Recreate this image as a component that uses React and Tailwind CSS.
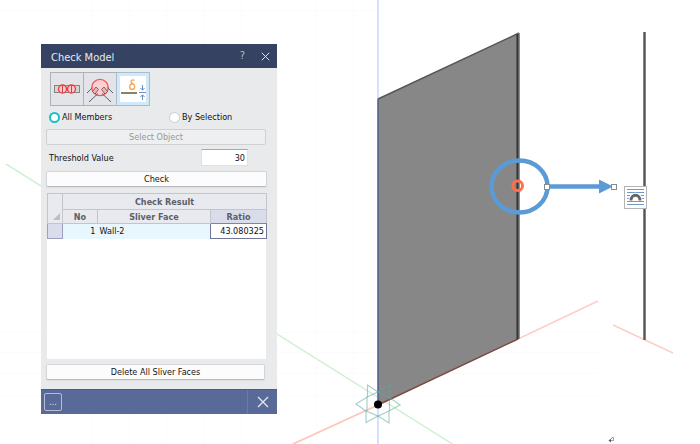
import React, { useState } from "react";

const buttonClass =
  "block h-4 rounded-xs border border-[#d4d5d8] border-b-[#b9babd] bg-[#fcfcfc] text-center leading-3 text-[#111] shadow-xs";

// 3D scene: axes, wall and the callout that points at the sliver face
function ModelView() {
  return (
    <svg
      className="absolute top-0 left-0"
      width="700"
      height="444"
      viewBox="0 0 700 444"
      fill="none"
    >
      {/* Grid */}
      <g stroke="#fbfbfb">
        <path d="M91.500 0V444M129.500 0V444M166.500 0V444M203.500 0V444M241.500 0V444M316.500 0V444M353.500 0V444" />
        <path d="M0 10.500H378M0 332.500H598M0 352.500H598M0 373.500H598M0 395.500H598" />
      </g>

      {/* Axes */}
      <path d="M6 164L454 445" stroke="#d3f0d5" strokeWidth="1.500" />
      <path d="M293 444L378 405" stroke="#ffc5ba" strokeWidth="1.800" />
      <path d="M518 339L598 301" stroke="#fdcfc6" strokeWidth="1.500" />
      <path d="M613 325L673 353" stroke="#fdcfc6" strokeWidth="1.500" />
      <path d="M378 0V444" stroke="#cbd9fa" strokeWidth="1.600" />

      {/* Wall */}
      <path d="M378 99L519 33V339L378 405Z" fill="#878787" />
      <path d="M378 99L519 33" stroke="#555" strokeWidth="1.400" />
      <path d="M378 405L518 339" stroke="#804a43" strokeWidth="1.500" />
      <path d="M378 99V405" stroke="#4a5c8c" strokeWidth="1.400" />
      <path d="M519 33V339" stroke="#909090" strokeWidth="2" />
      <path d="M517.500 34V339" stroke="#333" strokeWidth="2" />

      {/* Side view of the wall */}
      <path d="M644.500 32V340" stroke="#9a9a9a" strokeWidth="3" />
      <path d="M644.500 32V340" stroke="#555" strokeWidth="1.600" />

      {/* Origin */}
      <g stroke="#5fa9a3" strokeOpacity="0.550" strokeWidth="1.200">
        <path d="M367.500 385L378 392L390 385V398L400 405L389 411V423L378 416L366 422.500V411L356 404L367.500 397Z" />
        <path d="M367 397V411M389.500 398V411M367 397L378 392L389.500 398M366 411L378 416L389 411" />
      </g>
      <circle cx="378" cy="404.500" r="4" fill="#000" />

      {/* Callout */}
      <ellipse cx="519.500" cy="186.500" rx="28" ry="26" stroke="#5b9bd5" strokeWidth="4.500" />
      <circle cx="517.700" cy="185.700" r="4.800" stroke="#ff6f4b" strokeWidth="3" />
      <path d="M549 186.500H601" stroke="#5b9bd5" strokeWidth="4.500" />
      <path d="M599 179.500L613 186.500L599 193.500Z" fill="#5b9bd5" />
      <g fill="#fff" stroke="#8a8a8a">
        <rect x="544.500" y="184.500" width="5" height="5" />
        <rect x="611.500" y="184.500" width="5" height="5" />
      </g>

      {/* Paragraph mark */}
      <path d="M611 438.500H612V437.500H613.500V440.500H610" stroke="#888" strokeWidth="0.800" />
      <path d="M608.500 440.500L611 438.700V442.500Z" fill="#555" />
    </svg>
  );
}

function OverlapIcon() {
  return (
    <svg width="26" height="26" viewBox="0 0 26 26" fill="none">
      <rect x="0.500" y="9.500" width="25" height="7" fill="#d2d4d6" stroke="#80858a" />
      <g fill="#fbc9cb" stroke="#f0383f" strokeWidth="1.300">
        <circle cx="8.500" cy="13" r="4" />
        <circle cx="17.500" cy="13" r="4" />
      </g>
      <path d="M8.500 9.500V16.500M17.500 9.500V16.500" stroke="#c0484f" />
    </svg>
  );
}

function JointIcon() {
  return (
    <svg width="26" height="26" viewBox="0 0 26 26" fill="none">
      <path d="M0 17L6 11L11 17L2 26ZM26 17L20 11L15 17L24 26Z" fill="#dfe2e6" />
      <circle cx="13" cy="11.500" r="8.200" fill="#fccfd1" stroke="#f4545a" strokeWidth="1.300" />
      <path d="M0 17L5.500 11.500M2 26L11 17.500M26 17L20.500 11.500M24 26L15 17.500" stroke="#5b5f66" />
      <path
        d="M5.500 15.500L9 11L11.500 13.500L8 18ZM20.500 15.500L17 11L14.500 13.500L18 18Z"
        fill="#dcb9bd"
        stroke="#8d4d54"
        strokeWidth="0.900"
      />
    </svg>
  );
}

function SliverIcon() {
  return (
    <svg width="26" height="26" viewBox="0 0 26 26" fill="none">
      <rect width="26" height="26" fill="#fff" />
      <path
        d="M14.500 4.500C13 3.500 10.500 4 11 5.800C11.500 7.300 14.700 8 14.700 10.500C14.700 12.500 13.700 13.500 12.200 13.500C10.500 13.500 9.700 12.300 9.700 10.700C9.700 9 10.800 8 12.500 7.800"
        stroke="#f7a258"
        strokeWidth="1.300"
      />
      <path d="M1 17H17" stroke="#8a8264" strokeWidth="2" />
      <path d="M19 16.500H26M22.500 9V14M20.500 12L22.500 14.200L24.500 12M22.500 24V19M20.500 21L22.500 18.800L24.500 21" stroke="#6f8cc0" />
    </svg>
  );
}

function CloseIcon({ size }) {
  return (
    <svg width={size} height={size} viewBox="0 0 12 12" stroke="#e4e8f2" strokeWidth="1.300">
      <path d="M1 1L11 11M11 1L1 11" />
    </svg>
  );
}

const tools = [
  { id: "overlap", label: "Overlapping members", Icon: OverlapIcon },
  { id: "joint", label: "Joints", Icon: JointIcon },
  { id: "sliver", label: "Sliver faces", Icon: SliverIcon },
];

const results = [{ no: 1, name: "Wall-2", ratio: "43.080325" }];

function CheckModelDialog() {
  const [tool, setTool] = useState("sliver");
  const [scope, setScope] = useState("all");
  const [threshold, setThreshold] = useState("30");

  return (
    <section className="relative w-[236px] bg-[#e8eaec]">
      {/* Title bar */}
      <header className="flex h-6 items-center bg-[#354262] pr-[7px] pl-[10px] text-[#e6eaf3]">
        <h1 className="flex-1 pt-1 text-[11px] leading-4 font-medium">Check Model</h1>
        <button aria-label="Help" className="mr-4 text-[11px] text-[#b4bccf]">
          ?
        </button>
        <button aria-label="Close">
          <CloseIcon size={9} />
        </button>
      </header>

      <div className="px-[5px] pt-1 pb-[9px]">
        {/* Check type */}
        <div className="ml-1 flex">
          {tools.map(({ id, label, Icon }) => (
            <button
              key={id}
              aria-label={label}
              onClick={() => setTool(id)}
              className={`flex h-[34px] w-[34px] -mr-px items-center justify-center border ${
                tool === id
                  ? "border-[#a9bccb] bg-[#cfe9fb]"
                  : "border-[#aeb1b6] bg-[#e3e4e7]"
              }`}
            >
              <Icon />
            </button>
          ))}
        </div>

        {/* Scope */}
        <div className="mt-[3px] flex pl-[3px]">
          {[
            ["all", "All Members"],
            ["selection", "By Selection"],
          ].map(([value, label]) => (
            <label key={value} className="flex h-4 w-[120px] shrink-0 items-center gap-[2px]">
              <input
                type="radio"
                name="scope"
                checked={scope === value}
                onChange={() => setScope(value)}
                className="h-[11px] w-[11px] appearance-none rounded-full border border-[#c9cbce] bg-white checked:border-2 checked:border-[#19bfc6]"
              />
              {label}
            </label>
          ))}
        </div>

        <button
          disabled
          className="mt-1 block h-4 w-[220px] rounded-xs border border-[#cfd0d2] bg-[#eeeff0] leading-3 text-[#96989b]"
        >
          Select Object
        </button>

        <div className="mt-1 flex h-[17px] items-center pl-[3px]">
          <label htmlFor="threshold" className="w-[152px]">
            Threshold Value
          </label>
          <input
            id="threshold"
            value={threshold}
            onChange={(e) => setThreshold(e.target.value)}
            className="h-[17px] w-[47px] border border-[#e0e1e3] border-t-[#a5a7ab] bg-white pr-[2px] text-right outline-none"
          />
        </div>

        <button className={`${buttonClass} mt-[5px] w-[221px]`}>Check</button>

        {/* Results */}
        <div className="mt-[6px] ml-px h-[166px] w-[219px] bg-white">
          <table className="w-full table-fixed border-collapse">
            <colgroup>
              <col className="w-[15px]" />
              <col className="w-[35px]" />
              <col className="w-[113px]" />
              <col className="w-[56px]" />
            </colgroup>
            <thead className="bg-[#e9eaef] text-[#5d6068]">
              <tr className="h-4">
                <th rowSpan={2} className="border border-[#c3c5cc] p-0 align-bottom">
                  <svg className="mb-[3px] ml-[5px]" width="7" height="7" viewBox="0 0 7 7">
                    <path d="M7 0V7H0Z" fill="#bcbec4" />
                  </svg>
                </th>
                <th colSpan={3} className="border border-[#c3c5cc] p-0">
                  Check Result
                </th>
              </tr>
              <tr className="h-[14px]">
                <th className="border border-[#c3c5cc] p-0">No</th>
                <th className="border border-[#c3c5cc] p-0">Sliver Face</th>
                <th className="border border-[#c3c5cc] border-b-[#8084a0] bg-[#d9dcea] p-0">Ratio</th>
              </tr>
            </thead>
            <tbody>
              {results.map((row) => (
                <tr key={row.no} className="h-[15px] bg-[#e8f6fe]">
                  <td className="border border-[#9da1bd] bg-[#d9dcea] p-0" />
                  <td className="p-0 pr-[2px] text-right">{row.no}</td>
                  <td className="p-0 pl-[2px]">{row.name}</td>
                  <td className="border border-[#70769a] bg-white p-0 pr-[2px] text-right">{row.ratio}</td>
                </tr>
              ))}
            </tbody>
          </table>
        </div>

        <button className={`${buttonClass} mt-[5px] w-[219px]`}>Delete All Sliver Faces</button>
      </div>

      {/* Bottom bar */}
      <footer className="flex h-[25px] items-center justify-between border-t border-[#4b5b87] bg-[#5a6a98] pl-[3px]">
        <button
          aria-label="More"
          className="flex h-[18px] w-[18px] items-center justify-center rounded-xs border border-[#b3bdd8] text-[#dfe4f1]"
        >
          ...
        </button>
        <button
          aria-label="Close panel"
          className="flex h-full w-[30px] items-center justify-center border-l border-[#6c7ba6]"
        >
          <CloseIcon size={12} />
        </button>
      </footer>
    </section>
  );
}

function LayoutOptions() {
  return (
    <button
      aria-label="Layout options"
      className="absolute top-[186px] left-[624px] flex h-[23px] w-[23px] items-center justify-center border border-[#b4b4b4] bg-white"
    >
      <svg width="17" height="17" viewBox="0 0 17 17" fill="none">
        <path
          d="M0 0.500H17M0 3.500H17M0 6.500H3M14 6.500H17M0 9.500H2M15 9.500H17M0 12.500H17M0 15.500H17"
          stroke="#6d9bca"
        />
        <path d="M4 11.500C4 4.500 13 4.500 13 11.500" stroke="#fff" strokeWidth="5" />
        <path d="M4 11.500C4 4.500 13 4.500 13 11.500" stroke="#666" strokeWidth="2.800" />
      </svg>
    </button>
  );
}

export default function App() {
  return (
    <main className="relative min-h-screen overflow-hidden bg-white pt-11 pl-[41px] font-['DejaVu_Sans_Condensed','DejaVu_Sans',sans-serif] text-[9px] leading-3 text-[#111]">
      <ModelView />
      <CheckModelDialog />
      <LayoutOptions />
    </main>
  );
}
